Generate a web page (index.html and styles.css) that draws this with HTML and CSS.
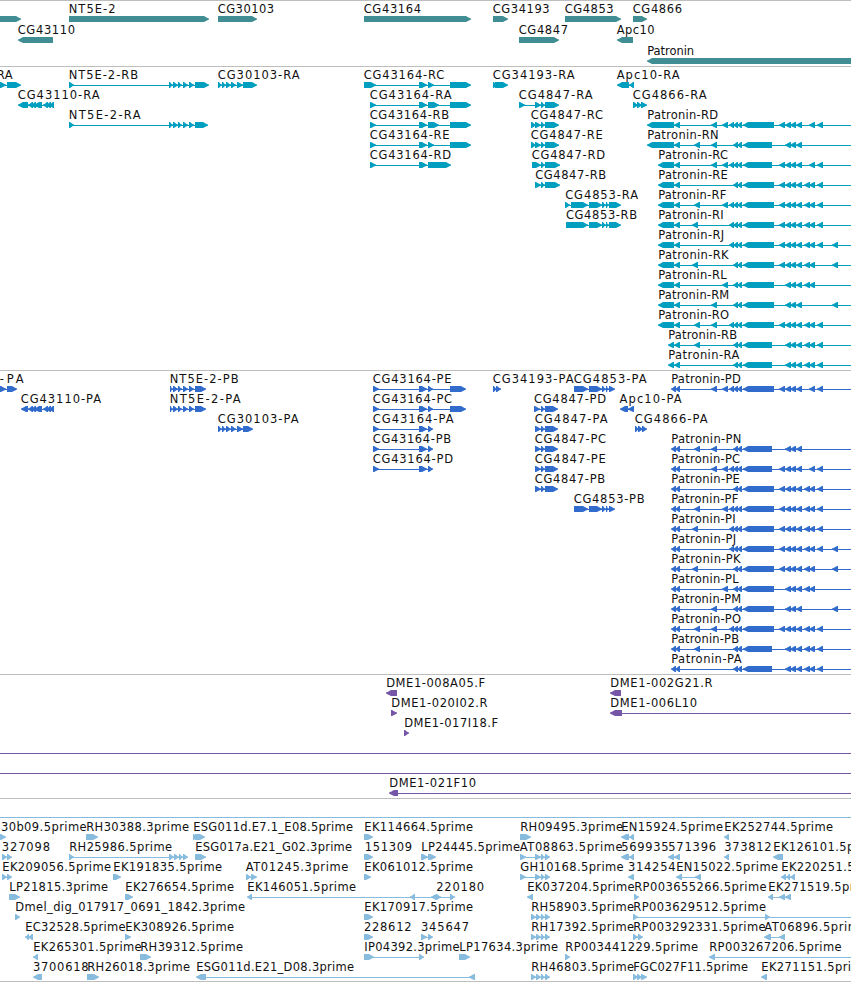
FILE: index.html
```
<!DOCTYPE html>
<html lang="en">
<head>
<meta charset="utf-8">
<title>Genome browser</title>
<link rel="stylesheet" href="styles.css">
</head>
<body>
<main class="browser">
  <section class="track genes" id="genes"></section>
  <section class="track transcripts" id="transcripts"></section>
  <section class="track proteins" id="proteins"></section>
  <section class="track clones" id="clones"></section>
  <section class="track ests" id="ests"></section>
</main>
<script src="tracks.js"></script>
</body>
</html>
```

FILE: styles.css
```
body {
  margin: 0;
  background: #fff;
}

.browser {
  display: flex;
  flex-direction: column;
  width: 851px;
  height: 982px;
  box-sizing: border-box;
  overflow: hidden;
  border-bottom: 1px solid #bebebe;
}

.track {
  display: flex;
  flex-direction: column;
  flex: none;
  box-sizing: border-box;
  border-top: 1px solid #bebebe;
}

.row {
  display: block;
  flex: none;
  width: 851px;
  height: 20px;
  overflow: visible;
  fill: currentColor;
}

.genes { height: 66px; color: #408e94; }
.genes .row { height: 21px; }
.transcripts { height: 304px; color: #009fc0; }
.proteins { height: 304px; color: #316ccd; }
.clones { height: 124px; color: #7657a7; }
.ests { height: 183px; color: #87bcde; }

.label {
  font-family: "DejaVu Sans", sans-serif;
  font-size: 11.5px;
  fill: #111;
}
```

FILE: tracks.js
```
const NS = "http://www.w3.org/2000/svg";
const EDGE = 851;

// Feature: [row, label, label start, label end, strand, "start-end start-end ...", line end]
const genes = [
  [0, "", 0, 0, ">", "-9-21"],
  [0, "NT5E-2", 69.5, 115, ">", "69-209"],
  [0, "CG30103", 218.5, 273.5, ">", "218-257"],
  [0, "CG43164", 364.5, 420.5, ">", "364-471"],
  [0, "CG34193", 493.5, 549, ">", "493-508"],
  [0, "CG4853", 565.5, 613, ">", "565-621"],
  [0, "CG4866", 633.5, 681.5, ">", "633-647"],
  [1, "CG43110", 18.5, 74.5, "<", "18-53"],
  [1, "CG4847", 519.5, 567.5, ">", "519-559"],
  [1, "Apc10", 617.5, 654, "<", "617-633"],
  [2, "Patronin", 648, 693.5, "<", "647-870"]
];

const nt = "169-173 173-178 178-182 183-188 189-194 195-";
const cg3 = "218-222 222-226 226-231 231-236 237-243 243-";
const cg431 = "28-33 31-36 34-42 43-48 46-51 49-54";
const cg53 = "589-602 602-606 606-609 609-";

const transcripts = [
  [0, "RA", -2.5, 12, ">", "0-6 7-21"],
  [0, "NT5E-2-RB", 69.5, 137.5, ">", "69-74 " + nt + "209"],
  [0, "CG30103-RA", 218.5, 299, ">", cg3 + "257"],
  [0, "CG43164-RC", 364.5, 443.7, ">", "364-376 419-427 428-434 450-471"],
  [0, "CG34193-RA", 493.5, 574, ">", "493-497 495-508"],
  [0, "Apc10-RA", 617.5, 679, "<", "617-629 629-634"],
  [1, "CG43110-RA", 18.5, 99, "<", "18-28 " + cg431],
  [1, "CG43164-RA", 370.5, 451, ">", "370-376 419-427 428-439 450-471"],
  [1, "CG4847-RA", 519.5, 592, ">", "519-525 535-541 541-545 545-559"],
  [1, "CG4866-RA", 633.5, 706, ">", "633-638 637-642 641-647"],
  [2, "NT5E-2-RA", 69.5, 140, ">", "69-74 " + nt + "208"],
  [2, "CG43164-RB", 370.5, 448.5, ">", "370-376 419-427 428-439 450-471"],
  [2, "CG4847-RC", 531.5, 602.5, ">", "531-536 535-541 541-545 545-559"],
  [3, "CG43164-RE", 370.5, 449, ">", "370-376 419-427 428-434 450-471"],
  [3, "CG4847-RE", 531.5, 602.2, ">", "531-536 535-541 541-545 545-559"],
  [4, "CG43164-RD", 370.5, 450.5, ">", "370-376 419-427 428-451"],
  [4, "CG4847-RD", 532.5, 604.5, ">", "532-541 541-545 545-560"],
  [5, "CG4847-RB", 536, 605.5, ">", "535-541 541-545 545-560"],
  [6, "CG4853-RA", 566, 637.5, ">", "565-570 571-588 " + cg53 + "621"],
  [7, "CG4853-RB", 566.7, 636.5, ">", "566-588 " + cg53 + "621"]
];

const cg431p = "373-379 419-427 428-433";
const proteins = [
  [0, "-PA", 0.5, 23, ">", "0-6 7-17"],
  [0, "NT5E-2-PB", 170.5, 238, ">", nt.replace("169", "170") + "206"],
  [1, "NT5E-2-PA", 170.5, 240, ">", nt.replace("169", "170") + "206"],
  [1, "CG43110-PA", 21.5, 100.5, "<", "21-28 " + cg431],
  [2, "CG30103-PA", 218.5, 298, ">", cg3 + "253"],
  [0, "CG43164-PE", 373.5, 451, ">", cg431p + " 450-466"],
  [1, "CG43164-PC", 373.5, 451.5, ">", cg431p + " 450-466"],
  [2, "CG43164-PA", 373.5, 453, ">", cg431p],
  [3, "CG43164-PB", 373.5, 450.5, ">", cg431p],
  [4, "CG43164-PD", 373.5, 452.5, ">", cg431p],
  [0, "CG34193-PA", 493.5, 573, ">", "493-497 496-501"],
  [0, "CG4853-PA", 574.5, 646, ">", "574-588 " + cg53 + "615"],
  [1, "CG4847-PD", 534.7, 605.5, ">", "534-540 541-545 545-558"],
  [2, "CG4847-PA", 535.5, 607, ">", "535-541 541-545 545-558"],
  [3, "CG4847-PC", 535.5, 605.5, ">", "535-541 541-545 545-558"],
  [4, "CG4847-PE", 535.5, 605.3, ">", "535-541 541-545 545-558"],
  [5, "CG4847-PB", 535.5, 604.5, ">", "535-541 541-545 545-558"],
  [6, "CG4853-PB", 574.5, 644, ">", "574-588 " + cg53 + "615"],
  [1, "Apc10-PA", 620.3, 681, "<", "620-628 628-634"],
  [2, "CG4866-PA", 635.5, 707, ">", "635-639 638-643 642-647"]
];

// Exons shared by the Patronin isoforms; "B" and "S" are the long and short central exon.
const exons = {
  m: "694-700", n: "692-698", b: "711-717", c: "722-728", d: "729-734", e: "733-738",
  f: "737-742", B: "743-774", S: "743-772", g: "779-785", h: "785-791", i: "790-796",
  j: "796-802", q: "804-810", k: "809-815", l: "817-823", o: "832-838"
};
// Isoform: [letter, exons, transcript row, start, label end, protein row, protein label end]
[
  ["D", "bcdefBghijkl", 2, 647, 717.5, 0, 740.3],
  ["N", "mbefShij", 3, 647, 718, 3, 740.7],
  ["C", "bcdefSghijkl", 4, 658, 727.5, 4, 739.5],
  ["E", "efBghijqkl", 5, 658, 727.3, 5, 739.3],
  ["F", "mcdefBghijqkl", 6, 658, 725.7, 6, 737.7],
  ["I", "ndefBghijqkl", 7, 658, 723, 7, 735],
  ["J", "defBghijqklo", 8, 658, 723.5, 8, 735.5],
  ["K", "nefBghijqko", 9, 658, 728, 9, 740],
  ["L", "cefBhijqk", 10, 658, 726, 10, 738],
  ["M", "befBhijo", 11, 658, 728.7, 11, 740.7],
  ["O", "mbdefBghijqkl", 12, 658, 728.5, 12, 740.5],
  ["B", "mefShijqkl", 13, 668, 736.5, 13, 738.5],
  ["A", "efShijqkl", 14, 668, 738.8, 14, 741]
].forEach(([letter, set, tRow, start, tEnd, pRow, pEnd]) => {
  const shared = [...set].map(key => exons[key]).join(" ");
  transcripts.push([tRow, "Patronin-R" + letter, start + 1, tEnd, "<", `${start}-674 674-680 ${shared}`, EDGE]);
  proteins.push([pRow, "Patronin-P" + letter, 672, pEnd, "<", `671-676 675-680 ${shared}`, EDGE]);
});

const clones = [
  [0, "DME1-008A05.F", 387, 484.5, "<", "386-397"],
  [0, "DME1-002G21.R", 611, 712, "<", "610-621"],
  [1, "DME1-020I02.R", 392, 487, ">", "391-397"],
  [1, "DME1-006L10", 611, 696.5, "<", "610-622", EDGE],
  [2, "DME1-017I18.F", 405, 497.5, ">", "404-409"],
  [3, "", 0, 0, "<", "", EDGE],
  [4, "", 0, 0, "<", "", EDGE],
  [5, "DME1-021F10", 390, 475.5, "<", "389-398", EDGE]
];

const four = "531-536 536-541 541-545 545-550";
const ests = [
  [0, "", 0, 0, ">", "", EDGE],
  [1, "30b09.5prime", 1.7, 86, ">", "0-6"],
  [1, "RH30388.3prime", 87, 188.5, ">", "86-98"],
  [1, "ESG011d.E7.1_E08.5prime", 194, 352.5, ">", "193-197 195-205"],
  [1, "EK114664.5prime", 365, 472.5, ">", "364-373"],
  [1, "RH09495.3prime", 521, 622.5, ">", "520-531"],
  [1, "EN15924.5prime", 622, 722.5, "<", "621-629 629-634"],
  [1, "EK252744.5prime", 725, 832.5, "<", "724-729"],
  [2, "327098", 2.5, 49.5, ">", "2-7 7-12"],
  [2, "RH25986.5prime", 70, 171.5, ">", "69-74 169-174 174-179 179-183 183-188"],
  [2, "ESG017a.E21_G02.3prime", 196, 351.5, ">", "195-206"],
  [2, "151309", 365.5, 411.5, ">", "364-373"],
  [2, "LP24445.5prime", 422, 519.5, ">", "421-428 428-436"],
  [2, "AT08863.5prime", 520.5, 622, ">", "520-526 535-541 541-545 545-550"],
  [2, "569935", 622, 668, "<", "621-629 629-634"],
  [2, "571396", 669, 715.5, "<", "668-674 674-680"],
  [2, "373812", 725, 771, "<", "724-729"],
  [2, "EK126101.5prime", 774, 881.5, "<", "773-783"],
  [3, "EK209056.5prime", 3, 110.5, ">", "2-7 7-12"],
  [3, "EK191835.5prime", 114, 221.5, ">", "113-121"],
  [3, "AT01245.3prime", 246.5, 347.7, ">", "246-251 251-257"],
  [3, "EK061012.5prime", 365, 472.5, ">", "364-371"],
  [3, "GH10168.5prime", 521, 623, ">", "520-526 535-541 541-545 545-550"],
  [3, "314254", 628.7, 675, "<", "628-634"],
  [3, "EN15022.5prime", 677, 777.5, "<", "676-682 695-701"],
  [3, "EK220251.5prime", 782, 889.5, "<", "781-786 786-790 790-795"],
  [4, "LP21815.3prime", 10, 107.5, ">", "9-20"],
  [4, "EK276654.5prime", 126, 233.5, ">", "125-133"],
  [4, "EK146051.5prime", 248, 355.5, "<", "247-252 410-415 431-437"],
  [4, "220180", 437, 483.5, ">", "436-441 450-455"],
  [4, "EK037204.5prime", 528, 634, "<", "527-533"],
  [4, "RP003655266.5prime", 635, 766, ">", "634-639"],
  [4, "EK271519.5prime", 769, 876.5, "<", "768-773 779-785 785-791"],
  [5, "Dmel_dig_017917_0691_1842.3prime", 16, 244.5, ">", "15-20"],
  [5, "EK170917.5prime", 365, 472.5, ">", "364-373"],
  [5, "RH58903.5prime", 532, 633.5, ">", four],
  [5, "RP003629512.5prime", 634, 765.5, ">", "633-638 765-770", EDGE],
  [6, "EC32528.5prime", 26, 125, "<", "25-29 28-33"],
  [6, "EK308926.5prime", 126, 233.5, ">", "125-131"],
  [6, "228612", 364.7, 411, ">", "364-373"],
  [6, "345647", 421.7, 468.5, ">", "421-427 428-433"],
  [6, "RH17392.5prime", 532, 633.5, ">", four],
  [6, "RP003292331.5prime", 634, 765, ">", "633-638 638-643"],
  [6, "AT06896.5prime", 765, 866, "<", "764-771 779-785"],
  [7, "EK265301.5prime", 34, 141, "<", "33-38"],
  [7, "RH39312.5prime", 141, 242.5, ">", "140-151"],
  [7, "IP04392.3prime", 365, 459, ">", "364-374 419-424"],
  [7, "LP17634.3prime", 460, 557.5, ">", "459-470"],
  [7, "RP003441229.5prime", 566, 697.5, ">", "565-570"],
  [7, "RP003267206.5prime", 710, 841, "<", "709-715", EDGE],
  [8, "3700618", 33.7, 88, "<", "33-42"],
  [8, "RH26018.3prime", 88, 189.5, ">", "87-99"],
  [8, "ESG011d.E21_D08.3prime", 197, 353.5, "<", "196-206 469-475"],
  [8, "RH46803.5prime", 532, 633.5, ">", four],
  [8, "FGC027F11.5prime", 634, 747.5, ">", "633-638 637-642 641-647"],
  [8, "EK271151.5prime", 762, 869.5, "<", "761-767"]
];

function exonPath(a, b, strand) {
  const head = Math.min(b - a - 1, 5);
  const [tail, neck, mid, tip] = strand === ">"
    ? [a, b - head, b - 1.5, b]
    : [b, a + head, a + 1.5, a];
  return `M${tail} 15H${neck}L${mid} 17L${tip} 17.6V18.6L${mid} 19.3L${neck} 21H${tail}Z`;
}

function add(parent, name, attributes) {
  const node = document.createElementNS(NS, name);
  for (const key in attributes) node.setAttribute(key, attributes[key]);
  parent.appendChild(node);
  return node;
}

function draw(id, features, rowCount) {
  const track = document.getElementById(id);
  const rows = Array.from({ length: rowCount }, () => add(track, "svg", { class: "row" }));
  for (const [row, label, start, end, strand, blocks, lineEnd] of features) {
    const svg = rows[row];
    const spans = (blocks.match(/-?\d+-\d+/g) || []).map(s => {
      const parts = s.match(/^(-?\d+)-(\d+)$/);
      return [+parts[1], +parts[2]];
    });
    const from = spans.length ? spans[0][0] + 1 : 0;
    const to = lineEnd || spans[spans.length - 1][1] - 1;
    add(svg, "rect", { x: from, y: 18, width: to - from, height: 1 });
    add(svg, "path", { d: spans.map(([a, b]) => exonPath(a, b, strand)).join("") });
    if (label) {
      const text = add(svg, "text", {
        class: "label", x: start - 0.8, y: 12,
        textLength: end - start + 1.4, lengthAdjust: "spacing"
      });
      text.textContent = label;
    }
  }
}

draw("genes", genes, 3);
draw("transcripts", transcripts, 15);
draw("proteins", proteins, 15);
draw("clones", clones, 6);
draw("ests", ests, 9);
```
